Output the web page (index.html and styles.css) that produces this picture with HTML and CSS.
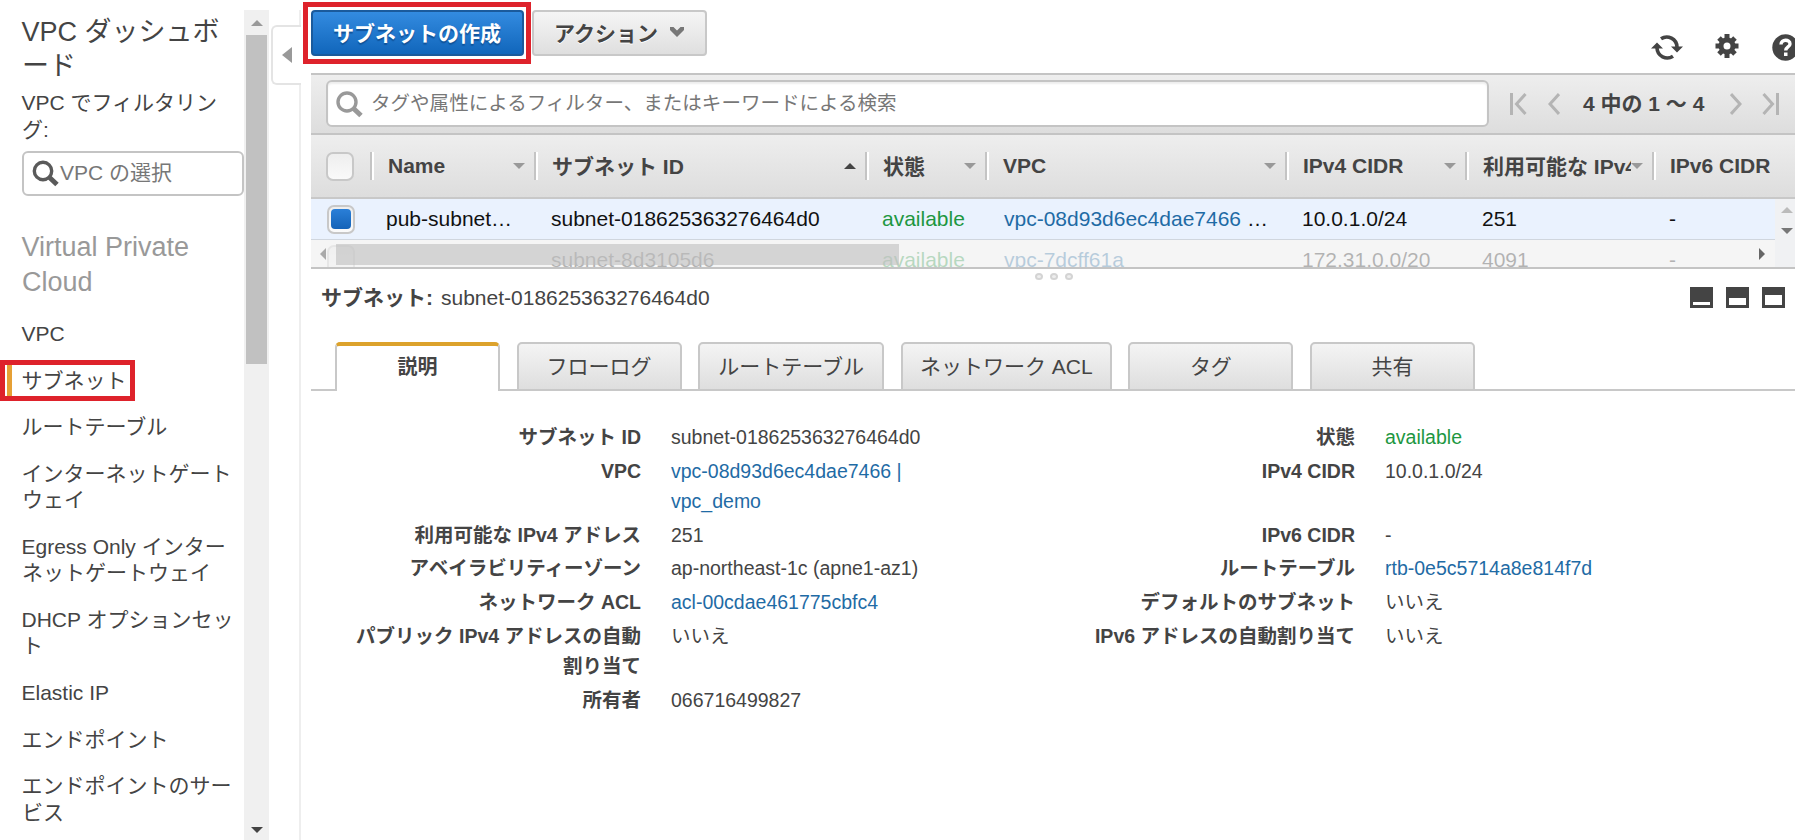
FILE: index.html
```html
<!DOCTYPE html>
<html lang="ja">
<head>
    <meta charset="utf-8">
    <title>VPC ダッシュボード</title>
    <link rel="stylesheet" href="styles.css">
</head>
<body>
    <div class="page">
        <div class="sidebar">
            <div class="nav">
                <h2>VPC ダッシュボ<br>ード</h2>
                <label class="filter-label">VPC でフィルタリン<br>グ:</label>
                <div class="vpc-select">
                    <svg width="28" height="28" viewBox="0 0 28 28"><circle cx="11" cy="11" r="8.7" fill="none" stroke="#5a5a5a" stroke-width="3.4"/><path d="M17.5 17.5L25 24.5" stroke="#5a5a5a" stroke-width="5"/></svg>
                    <span>VPC の選択</span>
                </div>
                <h3>Virtual Private<br>Cloud</h3>
                <ul>
                    <li>VPC</li>
                    <li class="current">サブネット<span class="marker"></span></li>
                    <li>ルートテーブル</li>
                    <li>インターネットゲート<br>ウェイ</li>
                    <li>Egress Only インター<br>ネットゲートウェイ</li>
                    <li>DHCP オプションセッ<br>ト</li>
                    <li>Elastic IP</li>
                    <li>エンドポイント</li>
                    <li>エンドポイントのサー<br>ビス</li>
                </ul>
            </div>
            <div class="scrollbar">
                <i class="tri up"></i>
                <div class="thumb"></div>
                <i class="tri down dark"></i>
            </div>
        </div>
        <div class="divider"><div class="collapse"></div></div>
        <div class="main">
            <div class="actions">
                <div class="highlight"><button class="btn primary">サブネットの作成</button></div>
                <button class="btn">アクション <svg width="14" height="11" viewBox="0 0 14 11"><path d="M0 1h3.5L7 4.5L10.5 1H14V4L7 11L0 4z" fill="#777"/></svg></button>
                <div class="tools">
                    <svg width="32" height="27" viewBox="0 0 32 27"><g fill="none" stroke="#444" stroke-width="3.6"><path d="M10 4.8A10.3 10.3 0 0 1 26 13"/><path d="M22 22.2A10.3 10.3 0 0 1 6 14"/></g><path d="M20 12.5h12L26 18.5zM0 14.5h12L6 8.5z" fill="#444"/></svg>
                    <svg class="gear" width="24" height="26" viewBox="0 0 24 26"><g stroke="#444" stroke-width="5"><path d="M12 1v24M0.5 13h23M4 5l16 16M20 5L4 21"/></g><circle cx="12" cy="13" r="6" fill="#fff" stroke="#444" stroke-width="5"/></svg>
                    <svg class="help" width="27" height="27" viewBox="0 0 27 27"><circle cx="13.5" cy="13.5" r="13.2" fill="#444"/><path d="M9 10.5C9 5 18 5 18 10c0 3-4.3 3-4.3 6.5" fill="none" stroke="#fff" stroke-width="3.4"/><rect x="12" y="18.5" width="3.5" height="3.5" fill="#fff"/></svg>
                </div>
            </div>
            <div class="filterbar">
                <div class="search">
                    <svg width="28" height="28" viewBox="0 0 28 28"><circle cx="11" cy="11" r="9" fill="none" stroke="#999" stroke-width="3.4"/><path d="M17.5 17.5L25 24.5" stroke="#999" stroke-width="5"/></svg>
                    <span>タグや属性によるフィルター、またはキーワードによる検索</span>
                </div>
                <div class="pager">
                    <svg width="17" height="22" viewBox="0 0 17 22"><path d="M1.5 0v22M15.5 1L6.5 11L15.5 21"/></svg>
                    <svg class="prev" width="12" height="22" viewBox="0 0 12 22"><path d="M11 1L2 11L11 21"/></svg>
                    <b>4 中の 1 ～ 4</b>
                    <svg class="next" width="12" height="22" viewBox="0 0 12 22"><path d="M1 1L10 11L1 21"/></svg>
                    <svg width="17" height="22" viewBox="0 0 17 22"><path d="M15.5 0v22M1.5 1L10.5 11L1.5 21"/></svg>
                </div>
            </div>
            <div class="row head">
                <div class="check"><i class="box"></i></div>
                <div class="th"><span>Name</span><i class="tri down"></i></div>
                <div class="th"><span class="ja">サブネット ID</span><i class="tri up dark"></i></div>
                <div class="th"><span class="ja">状態</span><i class="tri down"></i></div>
                <div class="th"><span>VPC</span><i class="tri down"></i></div>
                <div class="th"><span>IPv4 CIDR</span><i class="tri down"></i></div>
                <div class="th"><span class="ja">利用可能な IPv4</span><i class="tri down"></i></div>
                <div class="th last"><span>IPv6 CIDR</span></div>
            </div>
            <div class="rows">
                <div class="row selected">
                    <div class="check"><i class="box on"></i></div>
                    <div>pub-subnet…</div>
                    <div>subnet-018625363276464d0</div>
                    <div class="green">available</div>
                    <div class="vpc"><a>vpc-08d93d6ec4dae7466</a> …</div>
                    <div>10.0.1.0/24</div>
                    <div>251</div>
                    <div>-</div>
                </div>
                <div class="row faded">
                    <div class="check"><i class="box"></i></div>
                    <div></div>
                    <div>subnet-8d3105d6</div>
                    <div class="green">available</div>
                    <div class="vpc"><a>vpc-7dcff61a</a></div>
                    <div>172.31.0.0/20</div>
                    <div>4091</div>
                    <div>-</div>
                </div>
                <div class="hscroll"><i class="arrow-left"></i><div class="hthumb"></div><i class="arrow-right"></i></div>
                <div class="vscroll"><i class="tri up"></i><i class="tri down mid"></i></div>
            </div>
            <div class="grip"><i></i><i></i><i></i></div>
            <div class="title">
                <div class="name"><b>サブネット:</b><span>subnet-018625363276464d0</span></div>
                <div class="panes"><i class="pane low"></i><i class="pane half"></i><i class="pane full"></i></div>
            </div>
            <div class="tabs">
                <div class="tab active">説明</div>
                <div class="tab">フローログ</div>
                <div class="tab wide3">ルートテーブル</div>
                <div class="tab wide4">ネットワーク ACL</div>
                <div class="tab">タグ</div>
                <div class="tab">共有</div>
            </div>
            <div class="details">
                <b>サブネット ID</b><span>subnet-018625363276464d0</span>
                <b>状態</b><span class="green">available</span>
                <b>VPC</b><span><a>vpc-08d93d6ec4dae7466 |<br>vpc_demo</a></span>
                <b>IPv4 CIDR</b><span>10.0.1.0/24</span>
                <b>利用可能な IPv4 アドレス</b><span>251</span>
                <b>IPv6 CIDR</b><span>-</span>
                <b>アベイラビリティーゾーン</b><span>ap-northeast-1c (apne1-az1)</span>
                <b>ルートテーブル</b><span><a>rtb-0e5c5714a8e814f7d</a></span>
                <b>ネットワーク ACL</b><span><a>acl-00cdae461775cbfc4</a></span>
                <b>デフォルトのサブネット</b><span>いいえ</span>
                <b>パブリック IPv4 アドレスの自動<br>割り当て</b><span>いいえ</span>
                <b>IPv6 アドレスの自動割り当て</b><span>いいえ</span>
                <b>所有者</b><span>066716499827</span>
            </div>
        </div>
    </div>
</body>
</html>
```

FILE: styles.css
```css
*, *::before {
    box-sizing: border-box;
}
body {
    margin: 0;
    font-family: "Liberation Sans", "Noto Sans CJK JP", sans-serif;
    font-size: 21px;
    color: #444;
    background: #fff;
}
svg {
    display: block;
    flex: none;
}
a {
    color: #1f6ba5;
}
.green {
    color: #1d9741;
}
.page {
    display: flex;
    width: 1795px;
    height: 840px;
    overflow: hidden;
}

/* sidebar */
.sidebar {
    display: flex;
    width: 269px;
    padding-top: 10px;
}
.nav {
    width: 244px;
    padding-left: 22px;
    white-space: nowrap;
}
.nav h2 {
    margin: 5px 0 7px;
    font-size: 27px;
    font-weight: normal;
    line-height: 34px;
}
.nav h2, .nav h3, .filter-label, .nav ul {
    text-indent: -0.5px;
}
.filter-label {
    display: block;
    line-height: 26.5px;
}
.vpc-select {
    display: flex;
    align-items: center;
    height: 45px;
    margin-top: 8px;
    padding-left: 8px;
    border: 2px solid #c4c4c4;
    border-radius: 6px;
    color: #777;
}
.vpc-select span {
    padding-bottom: 5px;
}
.nav h3 {
    margin: 34px 0 22px;
    font-size: 27px;
    font-weight: normal;
    line-height: 35px;
    color: #999;
}
.nav ul {
    margin: -1px 0 0;
    padding: 0;
    list-style: none;
}
.nav li {
    margin-bottom: 20.1px;
    line-height: 26.5px;
}
.current {
    position: relative;
}
.current::before {
    content: "";
    position: absolute;
    left: -22px;
    top: -8px;
    width: 135px;
    height: 41px;
    border: 5px solid #de222b;
}
.marker {
    position: absolute;
    left: -15px;
    top: -3px;
    width: 5px;
    height: 31px;
    background: #e6a035;
}
.scrollbar {
    display: flex;
    flex-direction: column;
    align-items: center;
    width: 25px;
    padding: 10px 0 7px;
    background: #f0f0f0;
}
.thumb {
    width: 21px;
    height: 329px;
    margin: 9px 0 auto;
    background: #c1c1c1;
}
.tri {
    flex: none;
    width: 0;
    height: 0;
    border: 6px solid transparent;
}
.tri.up {
    border-top: 0;
    border-bottom-color: #999;
}
.tri.down {
    border-bottom: 0;
    border-top-color: #999;
}
.tri.up.dark {
    border-bottom-color: #444;
}
.tri.down.dark {
    border-top-color: #444;
}
.divider {
    width: 33px;
    padding: 25px 0 0 2px;
    background: linear-gradient(#eee, #eee) 30px 10px / 2px 100% no-repeat;
}
.collapse {
    display: flex;
    align-items: center;
    width: 30px;
    height: 60px;
    padding-left: 9px;
    border: 2px solid #e4e4e4;
    border-right: 0;
    border-radius: 6px 0 0 6px;
    background: #fff;
}
.collapse::before {
    content: "";
    border: 8px solid transparent;
    border-left: 0;
    border-right: 10px solid #999;
}

/* top buttons */
.main {
    width: 1493px;
    padding-left: 9px;
}
.actions {
    display: flex;
    height: 73px;
    margin-left: -8px;
    padding-top: 2px;
}
.highlight {
    width: 228px;
    height: 62px;
    padding: 3px;
    border: 5px solid #de222b;
}
.btn {
    display: flex;
    align-items: center;
    justify-content: center;
    gap: 12px;
    width: 175px;
    height: 46px;
    margin: 8px 0 0 1px;
    padding: 0 1px 3px 0;
    border: 2px solid #c8c8c8;
    border-radius: 4px;
    background: linear-gradient(#f5f5f5, #dfdfdf);
    font: bold 21px "Liberation Sans", "Noto Sans CJK JP", sans-serif;
    color: #444;
    text-shadow: 0 1px 0 #fff;
}
.btn.primary {
    width: 213px;
    margin: 0;
    border-color: #1a5a9c;
    background: linear-gradient(#338be0, #1166bb);
    color: #fff;
    text-shadow: 0 2px 1px #10539a;
}
.tools {
    display: flex;
    align-items: center;
    height: 26px;
    margin: 32px -4px 0 auto;
}
.tools .gear {
    margin: 0 33px 2px 32px;
}

/* filter bar */
.filterbar {
    display: flex;
    align-items: center;
    height: 62px;
    padding-left: 15px;
    border-top: 2px solid #c4c4c4;
    border-bottom: 2px solid #c4c4c4;
    background: linear-gradient(#eee, #ddd);
}
.search {
    display: flex;
    align-items: center;
    width: 1163px;
    height: 47px;
    margin-bottom: 1px;
    padding-left: 8px;
    border: 2px solid #c4c4c4;
    border-radius: 6px;
    background: #fff;
    box-shadow: inset 0 2px 2px #eee;
    font-size: 19.55px;
    color: #777;
}
.search svg {
    margin: 3px 7px 0 0;
}
.search span {
    padding-bottom: 4px;
}
.pager {
    display: flex;
    align-items: center;
    margin-left: 21px;
    white-space: nowrap;
}
.pager path {
    fill: none;
    stroke: #b4b4b4;
    stroke-width: 3;
}
.pager b {
    width: 121px;
    padding-bottom: 4px;
}
.pager .prev {
    margin: 0 23px 0 21px;
}
.pager .next {
    margin: 0 20px 0 26px;
}

/* table */
.row {
    display: grid;
    grid-template-columns: 59px 164px 331px 120px 300px 180px 187px 143px;
    align-items: center;
    white-space: nowrap;
}
.row > div {
    padding-left: 17px;
}
.row > :nth-child(2) {
    padding-left: 16px;
}
.row > .check {
    padding-left: 16px;
}
.row > .vpc {
    padding-left: 19px;
}
.head {
    height: 64px;
    border-bottom: 2px solid #c8c8c8;
    background: linear-gradient(#eee, #ddd);
    font-weight: bold;
}
.head > .check {
    padding-left: 15px;
}
.head > .th {
    display: flex;
    align-items: center;
    justify-content: space-between;
    height: 28px;
    padding: 0 9px 0 14px;
    border-left: 2px solid #c4c4c4;
    box-shadow: inset 2px 0 #fff;
}
.head > .th.last {
    padding-right: 0;
}
.head span {
    min-width: 0;
    overflow: hidden;
    padding-left: 2px;
}
.head .ja {
    padding-bottom: 3px;
}
.box {
    display: block;
    width: 28px;
    height: 29px;
    border: 2px solid #c8c8c8;
    border-radius: 7px;
    background: linear-gradient(#eee, #fafafa);
}
.box.on {
    padding: 2px;
}
.box.on::before {
    content: "";
    display: block;
    height: 20px;
    border-radius: 4px;
    background: linear-gradient(#2a7fd8, #1463b8);
}
.rows {
    position: relative;
    height: 70px;
    overflow: hidden;
    border-bottom: 2px solid #c4c4c4;
}
.selected {
    height: 41px;
    border-bottom: 1px solid #d0d6de;
    background: #eaf2fe;
    color: #111;
}
.faded {
    height: 39px;
    color: #111;
}
.hscroll {
    position: absolute;
    left: 0;
    top: 41px;
    display: flex;
    align-items: center;
    width: 1464px;
    height: 27px;
    padding: 3px 10px 2px 9px;
    background: rgba(241, 241, 241, 0.72);
}
.hthumb {
    width: 563px;
    height: 21px;
    margin: 0 auto 0 10px;
    background: rgba(190, 190, 190, 0.6);
}
.arrow-left, .arrow-right {
    border: 6px solid transparent;
}
.arrow-left {
    border-left: 0;
    border-right-color: #aaa;
}
.arrow-right {
    border-right: 0;
    border-left-color: #666;
}
.vscroll {
    position: absolute;
    left: 1464px;
    top: 0;
    width: 26px;
    height: 68px;
    padding: 8px 0 0 6px;
    background: #f0f1f3;
}
.vscroll .tri {
    display: block;
    margin-bottom: 15px;
}
.vscroll .up {
    border-bottom-color: #bbb;
}
.vscroll .mid {
    border-top-color: #777;
}
.grip {
    display: flex;
    gap: 7px;
    height: 12px;
    padding: 4px 0 0 724px;
}
.grip i {
    width: 8px;
    height: 7px;
    border: 2px solid #d4d4d4;
    border-radius: 50%;
    background: #eee;
}

/* details */
.title {
    display: flex;
    align-items: center;
    justify-content: space-between;
    height: 34px;
    padding: 0 2px 2px 10px;
}
.name {
    display: flex;
    align-items: baseline;
    gap: 8px;
    padding-bottom: 3px;
}
.panes {
    display: flex;
    gap: 13px;
    margin-right: 8px;
}
.pane {
    width: 23px;
    height: 21px;
    border: 2px solid #444;
    background: #fff;
}
.pane.low {
    border-width: 15px 3px 3px;
}
.pane.half {
    border-width: 11px 3px 3px;
}
.pane.full {
    border-width: 8px 3px 3px;
}
.tabs {
    display: flex;
    gap: 16.6px;
    height: 49px;
    margin-top: 27px;
    padding-left: 24px;
    background: linear-gradient(#c8c8c8, #c8c8c8) 0 100% / 100% 2px no-repeat;
}
.tab {
    display: flex;
    align-items: center;
    justify-content: center;
    width: 165px;
    padding-bottom: 3px;
    border: 2px solid #c8c8c8;
    border-radius: 5px 5px 0 0;
    background: linear-gradient(#f4f4f4, #dedede);
    white-space: nowrap;
}
.tab.active {
    padding-bottom: 6px;
    border-top: 4px solid #dca22c;
    border-bottom: 0;
    background: #fff;
    font-size: 20px;
    font-weight: bold;
}
.wide3 {
    width: 186px;
}
.wide4 {
    width: 211px;
}
.details {
    display: grid;
    grid-template-columns: 330px 300px 354px 300px;
    column-gap: 30px;
    padding-top: 29px;
    font-size: 19.5px;
    line-height: 30px;
}
.details b {
    text-align: right;
}
.details b, .details span {
    padding: 2px 0 1.8px;
}
```
